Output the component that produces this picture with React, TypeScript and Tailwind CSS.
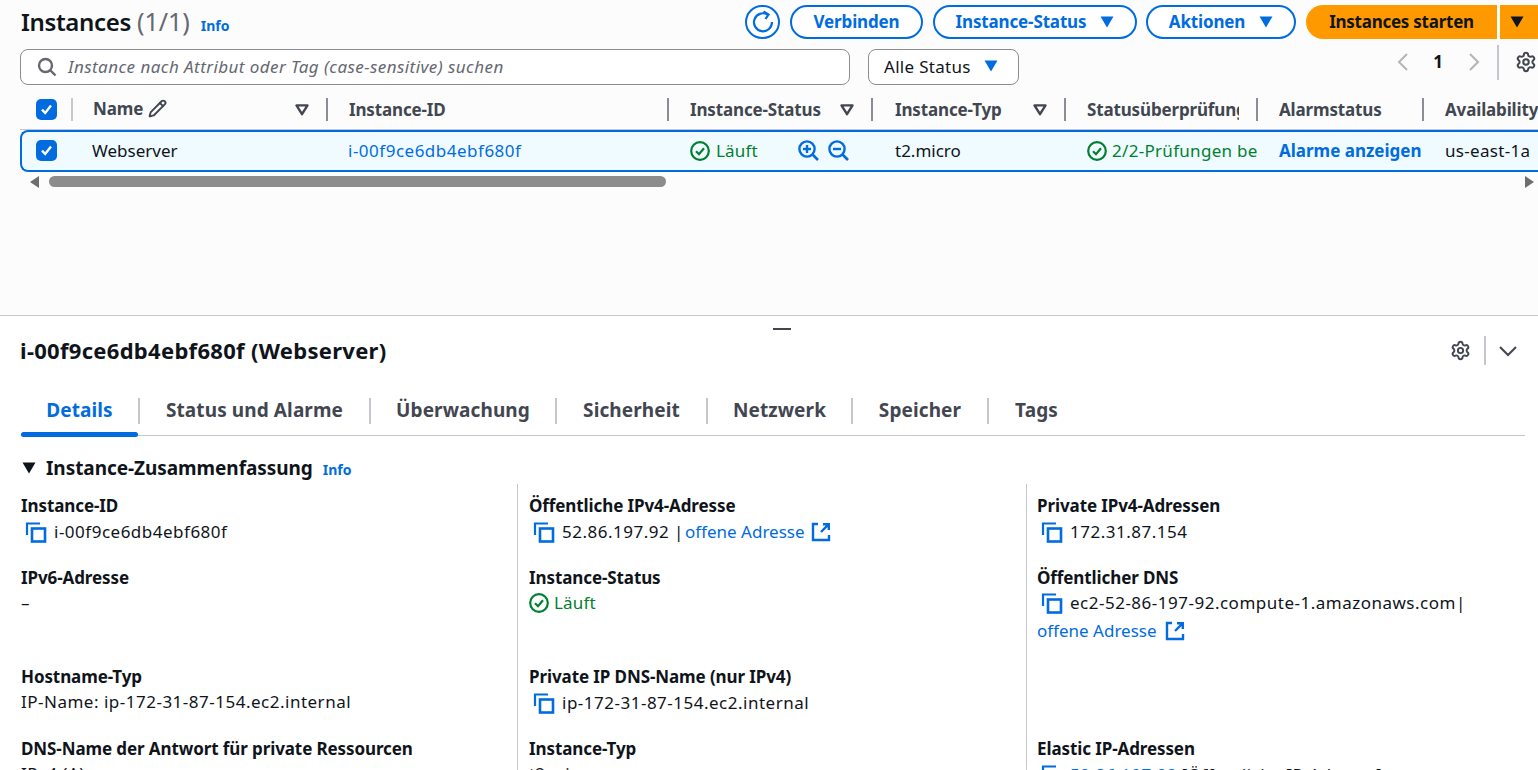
import React from "react";
import { Settings, Pencil } from "lucide-react";

const Blue = "#006ce0";

function Caret({ color = Blue, size = 14 }: { color?: string; size?: number }) {
  return (
    <svg width={size} height={size * 0.86} viewBox="0 0 14 12" className="shrink-0">
      <path d="M0.5 0.5H13.5L7 11.5Z" fill={color} />
    </svg>
  );
}
function FilterCaret() {
  return (
    <svg width="14" height="12" viewBox="0 0 14 12" className="shrink-0">
      <path d="M1.5 1.4H12.5L7 10.2Z" fill="none" stroke="#424650" strokeWidth="2.4" strokeLinejoin="round" />
    </svg>
  );
}
function Copy() {
  return (
    <svg width="22" height="22" viewBox="0 0 22 22" className="shrink-0">
      <path d="M2 14V2.5H15" fill="none" stroke={Blue} strokeWidth="2.2" />
      <rect x="7" y="7.5" width="13" height="13" fill="none" stroke={Blue} strokeWidth="2.6" />
    </svg>
  );
}
function External() {
  return (
    <svg width="20" height="20" viewBox="0 0 20 20" className="shrink-0">
      <path d="M7 2H2V18H18V13" fill="none" stroke={Blue} strokeWidth="2.4" />
      <path d="M12 2.2H17.8V8M17.8 2.2L10 10" fill="none" stroke={Blue} strokeWidth="2.4" />
    </svg>
  );
}
function Ok({ size = 20 }: { size?: number }) {
  return (
    <svg width={size} height={size} viewBox="0 0 20 20" className="shrink-0">
      <circle cx="10" cy="10" r="8.8" fill="none" stroke="#00802f" strokeWidth="2.2" />
      <path d="M6 10.2L9 13.2L14 7.2" fill="none" stroke="#00802f" strokeWidth="2.2" />
    </svg>
  );
}
function Zoom({ plus }: { plus?: boolean }) {
  return (
    <svg width="21" height="21" viewBox="0 0 21 21" className="shrink-0">
      <circle cx="9" cy="9" r="7.6" fill="none" stroke={Blue} strokeWidth="2.4" />
      <path d="M14.5 14.5L20 20" stroke={Blue} strokeWidth="2.6" />
      <path d="M5 9H13" stroke={Blue} strokeWidth="2.4" />
      {plus && <path d="M9 5V13" stroke={Blue} strokeWidth="2.4" />}
    </svg>
  );
}
function Check() {
  return (
    <span className="w-[21px] h-[21px] rounded-[5px] bg-[#006ce0] flex items-center justify-center shrink-0">
      <svg width="15" height="15" viewBox="0 0 15 15">
        <path d="M3 7.6L6.2 11L12 3.6" fill="none" stroke="#fff" strokeWidth="2.4" />
      </svg>
    </span>
  );
}
function Sep({ h = "h-[23px]", c = "bg-[#8c8c94]" }: { h?: string; c?: string }) {
  return <span className={`w-[2px] ${h} ${c} shrink-0`} />;
}

function Btn({ label, caret, w }: { label: string; caret?: boolean; w: string }) {
  return (
    <button className={`${w} h-[34px] rounded-full border-2 border-[#006ce0] text-[#006ce0] font-bold text-[17px] tracking-[-0.15px] flex items-center justify-center gap-[14px] bg-white`}>
      {label}
      {caret && <Caret />}
    </button>
  );
}

function Th({ w, label, filter, pl = "pl-[21px]", extra, up }: { w: string; label: string; filter?: boolean; pl?: string; extra?: React.ReactNode; up?: boolean }) {
  return (
    <div className={`${w} h-[23px] flex items-center justify-between shrink-0 overflow-hidden`}>
      <div className={`${pl} flex-1 flex items-center justify-between pr-[17px] min-w-0 overflow-hidden`}>
        <span className={`flex items-center gap-[5px] font-bold text-[#414750] tracking-[-0.15px] whitespace-nowrap overflow-hidden ${up ? "-mt-[2px]" : ""}`}>{label}{extra}</span>
        {filter && <FilterCaret />}
      </div>
      <Sep />
    </div>
  );
}

function Label({ children }: { children: React.ReactNode }) {
  return <div className="font-bold text-[#0f141a] leading-[24px] tracking-[-0.1px]">{children}</div>;
}
function Link({ children }: { children: React.ReactNode }) {
  return <span className="text-[#006ce0]">{children}</span>;
}
function Field({ label, children }: { label: string; children?: React.ReactNode }) {
  return (
    <div>
      <Label>{label}</Label>
      <div className="min-h-[26px] leading-[26px] text-[#0f141a]">{children}</div>
    </div>
  );
}
function CopyVal({ children }: { children: React.ReactNode }) {
  return (
    <div className="flex items-center pl-[4px] mt-[1px] gap-[7px] whitespace-nowrap">
      <Copy />
      <span>{children}</span>
    </div>
  );
}
function Num({ children }: { children: React.ReactNode }) {
  return <span className="tracking-[0.5px]">{children}</span>;
}

function Tab({ label, active, w }: { label: string; active?: boolean; w: string }) {
  return (
    <div className={`${w} relative h-[50px] flex items-center justify-center font-bold text-[19px] tracking-[0.1px] ${active ? "text-[#006ce0]" : "text-[#424650]"}`}>
      {label}
      {active && <span className="absolute left-0 right-0 bottom-[-1px] h-[5px] rounded-[3px] bg-[#006ce0]" />}
    </div>
  );
}

export default function App() {
  return (
    <div className="w-[1538px] h-[770px] overflow-hidden bg-white text-[#0f141a] text-[17px] flex flex-col" style={{ fontFamily: '"Noto Sans", sans-serif' }}>
      <section className="h-[316px] shrink-0 bg-[#fcfcfc] border-b border-[#c6c6cd] flex flex-col">
        <div className="h-[44px] pl-[21px] flex items-center justify-between shrink-0">
          <div className="flex items-baseline">
            <span className="text-[24px] font-semibold tracking-[-0.35px]">Instances</span>
            <span className="text-[25px] text-[#656871] ml-[6px]">(1/1)</span>
            <span className="text-[14px] font-bold text-[#006ce0] ml-[11px]">Info</span>
          </div>
          <div className="flex items-center">
            <span className="w-[35px] h-[34px] rounded-full border-2 border-[#006ce0] flex items-center justify-center bg-white mr-[10px]">
              <svg width="24" height="24" viewBox="0 0 24 24" fill="none" stroke={Blue} strokeWidth="2.2">
                <path d="M16.5 4.5A9 9 0 1 0 21 12" />
                <path d="M12.5 1.5L17.5 4.5L14.5 9" />
              </svg>
            </span>
            <Btn label="Verbinden" w="w-[133px]" />
            <span className="w-[10px]" />
            <Btn label="Instance-Status" caret w="w-[204px]" />
            <span className="w-[9px]" />
            <Btn label="Aktionen" caret w="w-[150px]" />
            <span className="w-[10px]" />
            <button className="w-[191px] h-[34px] rounded-l-full bg-[#ff9900] font-bold tracking-[-0.25px] flex items-center justify-center">Instances starten</button>
            <span className="w-[3px]" />
            <button className="w-[38px] h-[34px] bg-[#ff9900] flex items-center justify-center pr-[4px]"><Caret color="#0f141a" /></button>
          </div>
        </div>

        <div className="h-[46px] flex items-center pl-[20px] shrink-0">
          <div className="w-[830px] h-[36px] rounded-[8px] border border-[#8c8c94] bg-white flex items-center pl-[16px] gap-[11px] text-[#656871] italic tracking-[0.44px]">
            <svg width="20" height="20" viewBox="0 0 20 20" fill="none" stroke="#656871" strokeWidth="2.4" className="shrink-0">
              <circle cx="8.5" cy="8.5" r="6.5" />
              <path d="M13 13L18.5 18.5" />
            </svg>
            Instance nach Attribut oder Tag (case-sensitive) suchen
          </div>
          <div className="ml-[18px] w-[151px] h-[36px] rounded-[8px] border border-[#8c8c94] bg-white flex items-center pl-[15px] pb-[1px] gap-[13px] tracking-[0.3px]">
            Alle Status <Caret />
          </div>
          <div className="flex-1 flex items-center justify-end h-[36px] mb-[10px] pr-[1px]">
            <svg width="14" height="20" viewBox="0 0 14 20" fill="none" stroke="#b4b4bb" strokeWidth="2" className="mr-[23px]"><path d="M11 2L3 10L11 18" /></svg>
            <span className="font-bold mr-[24px]">1</span>
            <svg width="14" height="20" viewBox="0 0 14 20" fill="none" stroke="#b4b4bb" strokeWidth="2" className="mr-[16px]"><path d="M3 2L11 10L3 18" /></svg>
            <Sep h="h-[35px]" c="bg-[#c6c6cd]" />
            <span className="w-[16px]" />
            <Settings size={22} color="#424650" strokeWidth={2.2} />
          </div>
        </div>

        <div className="h-[33px] ml-[20px] flex items-center border-b border-[#c6c6cd] shrink-0 w-[1518px] pb-[3px] pt-[3px] box-content">
          <div className="w-[53px] h-[23px] flex items-center justify-between shrink-0 pl-[16px]">
            <Check />
            <Sep c="bg-[#c6c6cd]" />
          </div>
          <Th w="w-[255px]" label="Name" filter pl="pl-[20px]" up extra={<Pencil size={19} color="#424650" strokeWidth={2.4} />} />
          <Th w="w-[341px]" label="Instance-ID" />
          <Th w="w-[204px]" label="Instance-Status" filter />
          <Th w="w-[193px]" label="Instance-Typ" filter pl="pl-[22px]" />
          <Th w="w-[192px]" label="Statusüberprüfung" />
          <Th w="w-[166px]" label="Alarmstatus" />
          <div className="pl-[21px] font-bold text-[#414750] tracking-[-0.15px] whitespace-nowrap">Availability Zone</div>
        </div>

        <div className="ml-[20px] w-[1518px] h-[42px] rounded-l-[8px] border-y-2 border-l-2 border-[#006ce0] bg-[#f0fbff] flex items-center pb-[1px] shrink-0">
          <div className="w-[50px] pl-[14px] shrink-0"><Check /></div>
          <div className="w-[255px] pl-[20px] shrink-0">Webserver</div>
          <div className="w-[341px] pl-[21px] shrink-0 text-[#006ce0]"><Num>i-00f9ce6db4ebf680f</Num></div>
          <div className="w-[204px] pl-[22px] shrink-0 flex items-center">
            <Ok />
            <span className="text-[#00802f] ml-[6px] w-[82px] tracking-[0.2px]">Läuft</span>
            <Zoom plus />
            <span className="w-[9px]" />
            <Zoom />
          </div>
          <div className="w-[193px] pl-[23px] shrink-0">t2.micro</div>
          <div className="w-[192px] pl-[22px] shrink-0 flex items-center overflow-hidden whitespace-nowrap text-[#00802f] gap-[5px]">
            <Ok /><span className="tracking-[0.3px]">2/2-Prüfungen bestanden</span>
          </div>
          <div className="w-[166px] pl-[22px] shrink-0 font-bold text-[#006ce0]">Alarme anzeigen</div>
          <div className="pl-[22px] whitespace-nowrap tracking-[0.3px]">us-east-1a</div>
        </div>

        <div className="h-[11px] mt-[4px] ml-[30px] w-[1504px] flex items-center shrink-0">
          <svg width="9" height="12" viewBox="0 0 9 12"><path d="M9 0V12L0 6Z" fill="#6e6e6e" /></svg>
          <span className="ml-[10px] w-[617px] h-[11px] rounded-full bg-[#8c8c8c]" />
          <span className="flex-1" />
          <svg width="9" height="12" viewBox="0 0 9 12"><path d="M0 0V12L9 6Z" fill="#6e6e6e" /></svg>
        </div>
      </section>

      <section className="flex-1 bg-white relative flex flex-col pl-[21px] pr-[13px] min-h-0 overflow-hidden">
        <span className="absolute left-[773px] top-[12px] w-[18px] h-[2px] bg-[#424650]" />
        <div className="h-[70px] flex items-center justify-between pb-[1px] shrink-0">
          <h2 className="text-[22px] font-bold tracking-[0.3px] -ml-[1px]">i-00f9ce6db4ebf680f (Webserver)</h2>
          <div className="flex items-center">
            <Settings size={21} color="#424650" strokeWidth={2.2} />
            <span className="w-[13px]" />
            <Sep h="h-[29px]" c="bg-[#c6c6cd]" />
            <svg width="20" height="12" viewBox="0 0 20 12" fill="none" stroke="#424650" strokeWidth="2" className="ml-[12px] mr-[7px]"><path d="M2 2L10 10L18 2" /></svg>
          </div>
        </div>
        <div className="flex items-center h-[50px] border-b border-[#c6c6cd] shrink-0">
          <Tab label="Details" active w="w-[117px]" />
          <Sep h="h-[26px]" c="bg-[#c6c6cd]" />
          <Tab label="Status und Alarme" w="w-[229px]" />
          <Sep h="h-[26px]" c="bg-[#c6c6cd]" />
          <Tab label="Überwachung" w="w-[184px]" />
          <Sep h="h-[26px]" c="bg-[#c6c6cd]" />
          <Tab label="Sicherheit" w="w-[149px]" />
          <Sep h="h-[26px]" c="bg-[#c6c6cd]" />
          <Tab label="Netzwerk" w="w-[143px]" />
          <Sep h="h-[26px]" c="bg-[#c6c6cd]" />
          <Tab label="Speicher" w="w-[134px]" />
          <Sep h="h-[26px]" c="bg-[#c6c6cd]" />
          <Tab label="Tags" w="w-[95px]" />
        </div>
        <div className="h-[58px] flex items-center shrink-0 gap-[10px] pt-[6px] pl-[1px]">
          <Caret color="#0f141a" />
          <span className="font-bold text-[19px] tracking-[-0.05px]">Instance-Zusammenfassung</span>
          <span className="text-[14px] font-bold text-[#006ce0] mt-[2px]">Info</span>
        </div>
        <div className="grid grid-cols-[496px_509px_1fr] flex-1 -mt-[10px]">
          <div className="grid grid-rows-[72px_99px_72px_72px] pt-[10px] pr-[12px] content-start">
            <Field label="Instance-ID"><CopyVal><Num>i-00f9ce6db4ebf680f</Num></CopyVal></Field>
            <Field label="IPv6-Adresse">–</Field>
            <Field label="Hostname-Typ"><Num>IP-Name: ip-172-31-87-154.ec2.internal</Num></Field>
            <Field label="DNS-Name der Antwort für private Ressourcen"><Num>IPv4 (A)</Num></Field>
          </div>
          <div className="grid grid-rows-[72px_99px_72px_72px] pt-[10px] pl-[11px] border-l border-[#c6c6cd] content-start">
            <Field label="Öffentliche IPv4-Adresse">
              <CopyVal>
                <span className="flex items-center gap-[6px]"><Num>52.86.197.92 |</Num><span className="-ml-[5px]"><Link>offene Adresse</Link></span><External /></span>
              </CopyVal>
            </Field>
            <Field label="Instance-Status">
              <span className="flex items-center gap-[5px] text-[#00802f] tracking-[0.2px]"><Ok />Läuft</span>
            </Field>
            <Field label="Private IP DNS-Name (nur IPv4)"><CopyVal><Num>ip-172-31-87-154.ec2.internal</Num></CopyVal></Field>
            <Field label="Instance-Typ">t2.micro</Field>
          </div>
          <div className="grid grid-rows-[72px_99px_72px_72px] pt-[10px] pl-[10px] border-l border-[#c6c6cd] content-start">
            <Field label="Private IPv4-Adressen"><CopyVal><Num>172.31.87.154</Num></CopyVal></Field>
            <div>
              <Label>Öffentlicher DNS</Label>
              <div className="leading-[28px] -mt-[2px]">
                <CopyVal><Num>ec2-52-86-197-92.compute-1.amazonaws.com|</Num></CopyVal>
                <span className="flex items-center gap-[8px]"><Link>offene Adresse</Link><External /></span>
              </div>
            </div>
            <div />
            <Field label="Elastic IP-Adressen">
              <CopyVal><Link><Num>52.86.197.92</Num></Link> <Num>[Öffentliche IP-Adresse]</Num></CopyVal>
            </Field>
          </div>
        </div>
      </section>
    </div>
  );
}
